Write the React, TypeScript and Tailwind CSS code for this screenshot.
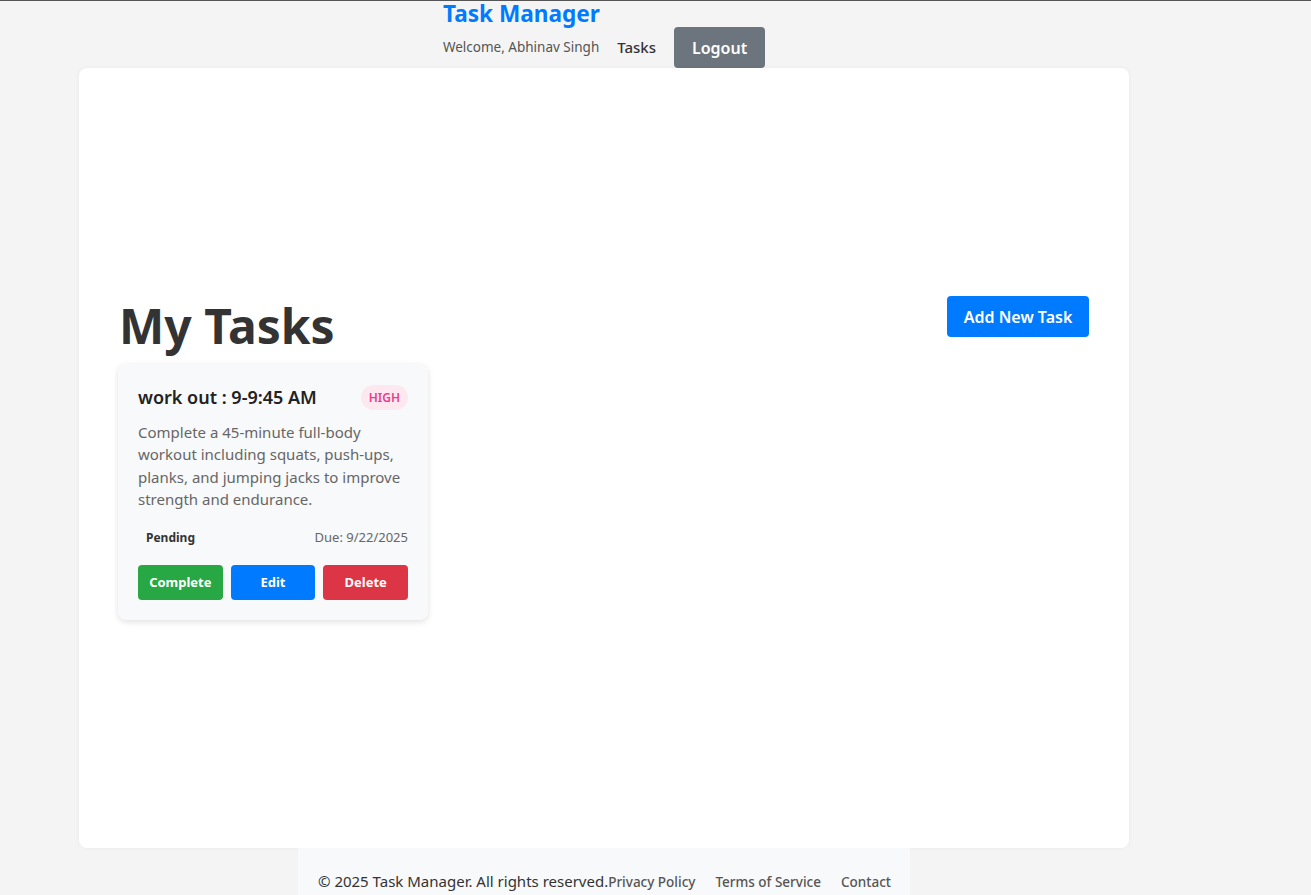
const font = { fontFamily: "'Segoe UI', 'Noto Sans', sans-serif" };

const TaskCard = () => (
  <div className="w-[310px] rounded-lg bg-[#f8f9fa] p-5 shadow-[0_2px_6px_rgba(0,0,0,0.12)]">
    <div className="flex items-center justify-between">
      <h3 className="whitespace-nowrap text-[18px] font-semibold text-[#222]">work out : 9-9:45 AM</h3>
      <span className="rounded-full bg-[#fde8ef] px-2 py-1 text-[12px] font-semibold leading-[17px] text-[#e83e8c]">
        HIGH
      </span>
    </div>
    <p className="mt-[10px] text-[15px] leading-[22.3px] text-[#666]">
      Complete a 45-minute full-body workout including squats, push-ups, planks, and jumping jacks to improve strength and endurance.
    </p>
    <div className="mt-[18px] flex items-center justify-between">
      <span className="px-2 text-[12px] font-bold text-[#333]">Pending</span>
      <span className="text-[13px] text-[#666]">Due: 9/22/2025</span>
    </div>
    <div className="mt-[17px] grid grid-cols-3 gap-2">
      <button className="h-[35px] rounded bg-[#28a745] text-[13px] font-bold text-white">Complete</button>
      <button className="h-[35px] rounded bg-[#007bff] text-[13px] font-bold text-white">Edit</button>
      <button className="h-[35px] rounded bg-[#dc3545] text-[13px] font-bold text-white">Delete</button>
    </div>
  </div>
);

export default function App() {
  return (
    <div style={font} className="min-h-[895px] border-t border-[#555] bg-[#f4f4f4]">
      <div className="flex w-[1208px] flex-col items-center">
        <header className="flex flex-col">
          <h1 className="text-[22.6px] font-bold leading-[26px] text-[#007bff]">Task Manager</h1>
          <nav className="flex h-[41px] items-center whitespace-nowrap">
            <span className="text-[13.5px] text-[#555]">Welcome, Abhinav Singh</span>
            <a className="ml-[18px] text-[15px] font-medium text-[#333]">Tasks</a>
            <button className="ml-[18px] h-[41px] w-[91px] rounded bg-[#6c757d] text-[16px] font-semibold text-white">
              Logout
            </button>
          </nav>
        </header>

        <main className="flex h-[780px] w-[1050px] flex-col justify-center rounded-lg bg-white px-10 pb-[5px] shadow-[0_0_4px_rgba(0,0,0,0.05)]">
          <div className="mb-[4px] flex items-start justify-between">
            <h2 className="mt-[-4px] text-[48px] font-bold leading-[68px] text-[#333]">My Tasks</h2>
            <button className="h-[41px] w-[142px] rounded bg-[#007bff] text-[16px] font-semibold text-white">
              Add New Task
            </button>
          </div>
          <div className="ml-[-1px] mb-[-5px]">
            <TaskCard />
          </div>
        </main>

        <footer className="flex h-[47px] w-[612px] items-end whitespace-nowrap bg-[#f8f9fa] px-5 pb-[3px]">
          <span className="text-[15px] text-[#333]">© 2025 Task Manager. All rights reserved.</span>
          <div className="flex gap-5 text-[13.5px] font-medium text-[#555]">
            <a>Privacy Policy</a>
            <a>Terms of Service</a>
            <a>Contact</a>
          </div>
        </footer>
      </div>
    </div>
  );
}
